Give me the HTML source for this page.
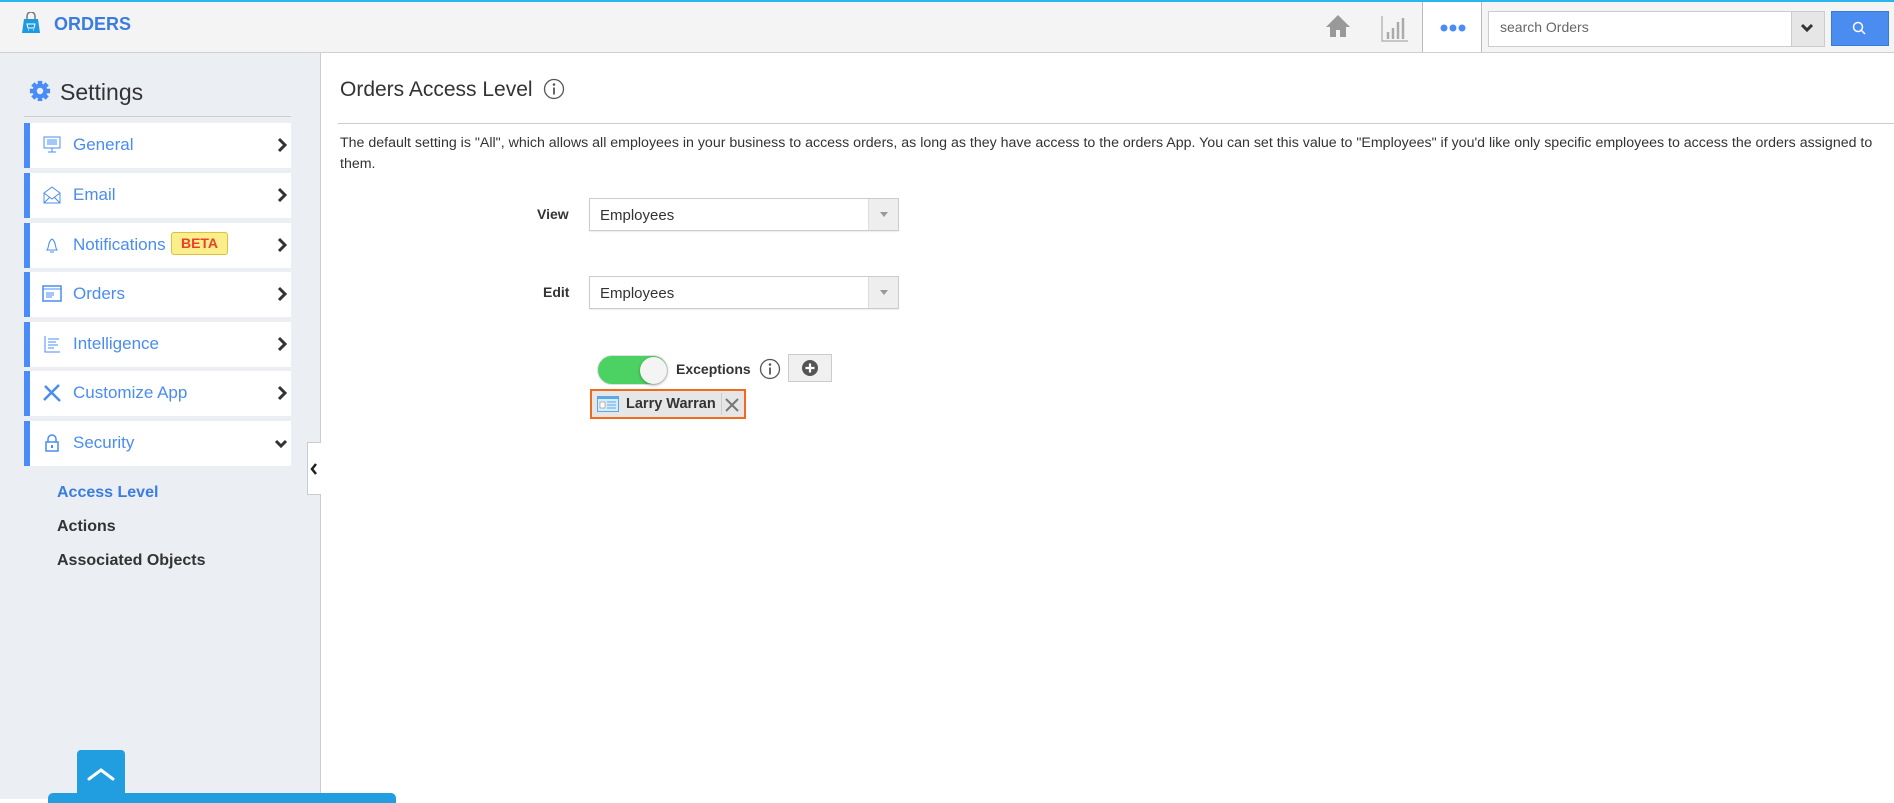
<!DOCTYPE html>
<html><head><meta charset="utf-8"><style>
*{box-sizing:border-box;margin:0;padding:0}
body{width:1894px;height:799px;overflow:hidden;font-family:"Liberation Sans",Arial,sans-serif;background:#fff;position:relative}
.a{position:absolute}
.top{left:0;top:0;width:1894px;height:53px;background:#f4f4f4;border-top:2px solid #29b6f0;border-bottom:1px solid #d0d0d0}
.side{left:0;top:53px;width:321px;height:746px;background:#ebeef3;border-right:1px solid #ccc}
.item{left:24px;width:267px;height:45px;background:#fff;border-left:6px solid #4a8cf7}
.item .t{position:absolute;left:43px;top:12px;font-size:17px;color:#4a8cf0;white-space:nowrap}
.item .ic{position:absolute;left:12px;top:12px;width:20px;height:20px}
.item .ch{position:absolute;left:246px;top:13px;width:14px;height:18px}
.sub{left:57px;font-size:16px;font-weight:bold;color:#333}
.sel{left:589px;width:310px;height:33px;border:1px solid #ccc;background:#fff;box-shadow:0 1px 1px rgba(0,0,0,.08)}
.sel span{position:absolute;left:10px;top:8px;font-size:15px;color:#333}
.sel i{position:absolute;right:0;top:0;width:30px;height:31px;background:#eee;border-left:1px solid #ddd}
.sel i:after{content:"";position:absolute;left:11px;top:13px;border-left:4px solid transparent;border-right:4px solid transparent;border-top:5px solid #999}
.lbl{font-size:14px;font-weight:bold;color:#333}
</style></head><body>
<div class="a top"></div>
<svg class="a" style="left:21px;top:12px" width="20" height="22" viewBox="0 0 20 22"><path d="M6 8V4a4 4 0 0 1 8 0v4" fill="none" stroke="#777" stroke-width="1.5"/><path d="M3 7h14l2 14H1z" fill="#1e9be0"/><path d="M6 12h8l-1 4H7z M7 18h1 M12 18h1" stroke="#fff" stroke-width="1" fill="none"/></svg>
<div class="a" style="left:54px;top:14px;font-size:18px;font-weight:bold;color:#3a7de0">ORDERS</div>
<svg class="a" style="left:1325px;top:13px" width="26" height="26" viewBox="0 0 26 26"><path d="M13 2L1 14h4v10h6v-7h4v7h6V14h4z" fill="#999"/></svg>
<svg class="a" style="left:1381px;top:14px" width="28" height="28" viewBox="0 0 28 28"><path d="M1 2v25h26" fill="none" stroke="#aaa" stroke-width="1.2"/><path d="M7 18v7M12 14v11M17 8v17M22 4v21" stroke="#aaa" stroke-width="2.5"/></svg>
<div class="a" style="left:1422px;top:2px;width:60px;height:50px;background:#fff;border-left:1px solid #bbb;border-right:1px solid #bbb"></div>
<svg class="a" style="left:1440px;top:24px" width="27" height="8"><circle cx="4" cy="4" r="3.5" fill="#4a8cf7"/><circle cx="13" cy="4" r="3.5" fill="#4a8cf7"/><circle cx="22" cy="4" r="3.5" fill="#4a8cf7"/></svg>
<div class="a" style="left:1488px;top:11px;width:337px;height:36px;background:#fff;border:1px solid #ccc"></div>
<div class="a" style="left:1500px;top:19px;font-size:14px;color:#666">search Orders</div>
<div class="a" style="left:1791px;top:12px;width:33px;height:34px;background:#e6e6e6;border-left:1px solid #ccc"></div>
<svg class="a" style="left:1800px;top:23px" width="14" height="10"><path d="M2 2l5 5 5-5" fill="none" stroke="#333" stroke-width="3"/></svg>
<div class="a" style="left:1831px;top:11px;width:58px;height:35px;background:#4a8cf0;border:1px solid #3a7ad8"></div>
<svg class="a" style="left:1851px;top:20px" width="16" height="16"><circle cx="7" cy="7" r="4.5" fill="none" stroke="#fff" stroke-width="1.5"/><path d="M10 10l4 4" stroke="#fff" stroke-width="1.5"/></svg>

<div class="a side"></div>
<svg class="a" style="left:26px;top:80px" width="28" height="22" viewBox="-12 -12 24 24"><g fill="#4a8cf7"><circle r="8"/><rect x="-2.5" y="-11" width="5" height="22"/><rect x="-2.5" y="-11" width="5" height="22" transform="rotate(45)"/><rect x="-2.5" y="-11" width="5" height="22" transform="rotate(90)"/><rect x="-2.5" y="-11" width="5" height="22" transform="rotate(135)"/></g><circle r="3.5" fill="#ebeef3"/></svg>
<div class="a" style="left:60px;top:79px;font-size:23px;color:#333">Settings</div>
<div class="a" style="left:24px;top:116px;width:267px;height:1px;background:#ccc"></div>

<div class="a item" style="top:123px"><svg class="ic" viewBox="0 0 20 20"><rect x="2" y="2" width="16" height="11" fill="none" stroke="#4a8cf0"/><path d="M5 5h10M5 7h10M5 9h10M10 13v4M6 17h8" stroke="#4a8cf0"/></svg><span class="t">General</span><svg class="ch" viewBox="0 0 14 18"><path d="M3 3l6 6-6 6" fill="none" stroke="#333" stroke-width="3"/></svg></div>
<div class="a item" style="top:173px"><svg class="ic" viewBox="0 0 20 20"><path d="M2 8l8-6 8 6v10H2z M2 8l8 6 8-6 M2 18l6-6 M18 18l-6-6" fill="none" stroke="#4a8cf0"/></svg><span class="t">Email</span><svg class="ch" viewBox="0 0 14 18"><path d="M3 3l6 6-6 6" fill="none" stroke="#333" stroke-width="3"/></svg></div>
<div class="a item" style="top:223px"><svg class="ic" viewBox="0 0 20 20"><path d="M5 15c2-2 1-9 5-11 4 2 3 9 5 11z M8 17h4" fill="none" stroke="#4a8cf0"/></svg><span class="t">Notifications</span><div class="a" style="left:141px;top:9px;width:57px;height:23px;background:#fcee8a;border:1px solid #d9c23c;border-radius:3px;color:#e8412c;font-weight:bold;font-size:14px;text-align:center;line-height:21px">BETA</div><svg class="ch" viewBox="0 0 14 18"><path d="M3 3l6 6-6 6" fill="none" stroke="#333" stroke-width="3"/></svg></div>
<div class="a item" style="top:272px"><svg class="ic" viewBox="0 0 20 20"><rect x="1" y="2" width="18" height="15" fill="none" stroke="#4a8cf0" stroke-width="1.5"/><path d="M1 5h18M4 9h8M4 11h8M4 13h6" stroke="#4a8cf0"/></svg><span class="t">Orders</span><svg class="ch" viewBox="0 0 14 18"><path d="M3 3l6 6-6 6" fill="none" stroke="#333" stroke-width="3"/></svg></div>
<div class="a item" style="top:322px"><svg class="ic" viewBox="0 0 20 20"><path d="M3 2v16h15M6 5h11M6 8h8M6 11h10M6 14h6" fill="none" stroke="#4a8cf0"/></svg><span class="t">Intelligence</span><svg class="ch" viewBox="0 0 14 18"><path d="M3 3l6 6-6 6" fill="none" stroke="#333" stroke-width="3"/></svg></div>
<div class="a item" style="top:371px"><svg class="ic" viewBox="0 0 20 20"><path d="M3 3l15 15M17 2l-15 15" stroke="#4a8cf0" stroke-width="2.5"/></svg><span class="t">Customize App</span><svg class="ch" viewBox="0 0 14 18"><path d="M3 3l6 6-6 6" fill="none" stroke="#333" stroke-width="3"/></svg></div>
<div class="a item" style="top:421px"><svg class="ic" viewBox="0 0 20 20"><path d="M6 9V6a4 4 0 0 1 8 0v3" fill="none" stroke="#4a8cf0" stroke-width="1.5"/><rect x="4" y="9" width="12" height="9" fill="none" stroke="#4a8cf0" stroke-width="1.5"/><path d="M10 12v3" stroke="#4a8cf0" stroke-width="2"/></svg><span class="t">Security</span><svg class="ch" viewBox="0 0 14 18" style="top:14px;left:244px"><path d="M2 6l5 5 5-5" fill="none" stroke="#333" stroke-width="3"/></svg></div>

<div class="a sub" style="top:484px;color:#3a7de0">Access Level</div>
<div class="a sub" style="top:518px">Actions</div>
<div class="a sub" style="top:552px">Associated Objects</div>
<div class="a" style="left:307px;top:442px;width:14px;height:53px;background:#fff;border:1px solid #ccc;border-right:none"></div>
<svg class="a" style="left:309px;top:462px" width="10" height="14"><path d="M7 2L3 7l4 5" fill="none" stroke="#222" stroke-width="2.5"/></svg>

<div class="a" style="left:77px;top:750px;width:48px;height:49px;background:#209ee0;border-radius:4px 4px 0 0"></div>
<svg class="a" style="left:86px;top:765px" width="30" height="18"><path d="M3 14l12-9 12 9" fill="none" stroke="#fff" stroke-width="3" stroke-linecap="round"/></svg>
<div class="a" style="left:48px;top:793px;width:348px;height:10px;background:#209ee0;border-radius:5px 5px 0 0"></div>

<div class="a" style="left:340px;top:78px;font-size:21px;color:#333">Orders Access Level</div>
<svg class="a" style="left:543px;top:78px" width="22" height="22"><circle cx="11" cy="11" r="9.5" fill="none" stroke="#555" stroke-width="1.3"/><circle cx="11" cy="6.5" r="1.3" fill="#555"/><path d="M11 9.5v7" stroke="#555" stroke-width="1.8"/></svg>
<div class="a" style="left:338px;top:123px;width:1556px;height:1px;background:#ccc"></div>
<div class="a" style="left:340px;top:133px;width:1552px;font-size:14.2px;line-height:21px;color:#333">The default setting is "All", which allows all employees in your business to access orders, as long as they have access to the orders App. You can set this value to "Employees" if you'd like only specific employees to access the orders assigned to them.</div>

<div class="a lbl" style="left:537px;top:206px">View</div>
<div class="a sel" style="top:198px"><span>Employees</span><i></i></div>
<div class="a lbl" style="left:543px;top:284px">Edit</div>
<div class="a sel" style="top:276px"><span>Employees</span><i></i></div>

<div class="a" style="left:597px;top:355px;width:71px;height:30px;background:#4cd263;border-radius:15px;border:1px solid #e0e0e0"></div>
<div class="a" style="left:640px;top:357px;width:27px;height:27px;background:#f4f4f4;border-radius:50%;box-shadow:0 1px 3px rgba(0,0,0,.35)"></div>
<div class="a lbl" style="left:676px;top:361px">Exceptions</div>
<svg class="a" style="left:759px;top:358px" width="22" height="22"><circle cx="11" cy="11" r="9.5" fill="none" stroke="#555" stroke-width="1.3"/><circle cx="11" cy="6.5" r="1.3" fill="#555"/><path d="M11 9.5v7" stroke="#555" stroke-width="1.8"/></svg>
<div class="a" style="left:788px;top:354px;width:44px;height:28px;background:#f0f0f0;border:1px solid #ccc"></div>
<svg class="a" style="left:801px;top:359px" width="18" height="18"><circle cx="9" cy="9" r="8" fill="#555"/><path d="M9 4.5v9M4.5 9h9" stroke="#fff" stroke-width="2.2"/></svg>

<div class="a" style="left:590px;top:389px;width:156px;height:30px;border:2px solid #f26a1b;background:#e6e6e6"></div>
<svg class="a" style="left:597px;top:396px" width="22" height="16"><rect x="0.5" y="0.5" width="21" height="15" fill="#d8ecfb" stroke="#5aa9e6"/><rect x="1" y="1" width="20" height="2" fill="#5aa9e6"/><rect x="3" y="6" width="5" height="6" fill="#fff" stroke="#888" stroke-width=".6"/><path d="M10 6h9M10 9h9M10 12h9" stroke="#5aa9e6"/></svg>
<div class="a" style="left:626px;top:396px;font-size:14.5px;font-weight:bold;color:#333">Larry Warran</div>
<div class="a" style="left:721px;top:393px;width:1px;height:22px;background:#ccc"></div>
<svg class="a" style="left:724px;top:397px" width="16" height="16"><path d="M2 2l12 12M14 2L2 14" stroke="#777" stroke-width="2"/></svg>
</body></html>
